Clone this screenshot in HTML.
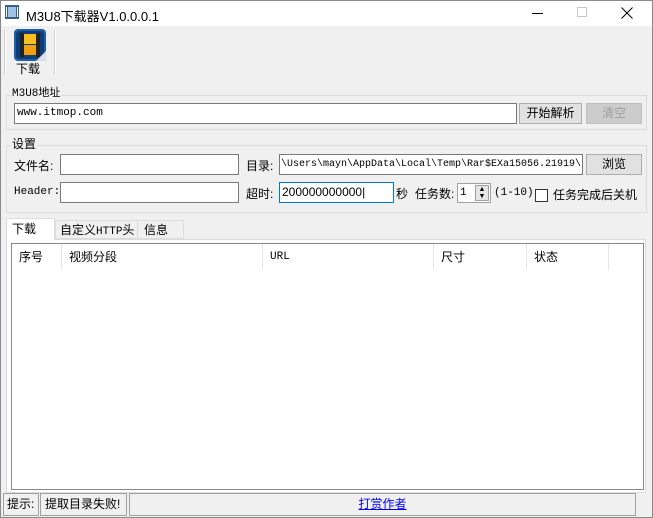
<!DOCTYPE html>
<html><head><meta charset="utf-8"><style>
*{box-sizing:border-box;margin:0;padding:0}
body{width:653px;height:518px;background:#f0f0f0;font-family:"Liberation Sans","Noto Sans CJK SC",sans-serif;font-size:12px;color:#000;position:relative;overflow:hidden}
.a{position:absolute}
.mono{font-family:"Liberation Mono","Noto Sans CJK SC",monospace;font-size:11px}
.in{position:absolute;background:#fff;border:1px solid #7a7a7a;height:21px;line-height:19px;padding-left:2px;white-space:nowrap;overflow:hidden}
.btn{position:absolute;background:#e1e1e1;border:1px solid #adadad;text-align:center;line-height:19px;height:21px}
.grp{position:absolute;border:1px solid #dcdcdc}
.lbl{position:absolute;background:#f0f0f0;padding:0 1px;line-height:14px}
.col{position:absolute;top:0;height:26px;border-right:1px solid #e5e5e5;line-height:26px;padding-left:7px}
.sp{position:absolute;top:493px;height:23px;border:1px solid #a0a0a0;line-height:21px}
</style></head><body>
<div class="a" style="left:0;top:0;width:653px;height:518px;border:1px solid #8a8a8a"></div>
<div class="a" style="left:1px;top:1px;width:651px;height:25px;background:#fff"></div>
<svg class="a" style="left:5px;top:5px" width="14" height="14"><rect x="0" y="0" width="14" height="14" fill="#3a5f8a"/><rect x="3" y="2" width="8" height="10" fill="#9fc3e6"/><rect x="1" y="2" width="1" height="10" fill="#fff"/><rect x="12" y="2" width="1" height="10" fill="#fff"/></svg>
<div class="a" style="left:26px;top:6px;font-size:13px">M3U8下载器V1.0.0.0.1</div>
<div class="a" style="left:532px;top:13px;width:11px;height:1px;background:#000"></div>
<div class="a" style="left:577px;top:7px;width:10px;height:10px;border:1px solid #c8c8c8"></div>
<svg class="a" style="left:621px;top:7px" width="12" height="12"><path d="M0.5 0.5L11.5 11.5M11.5 0.5L0.5 11.5" stroke="#000" stroke-width="1"/></svg>
<div class="a" style="left:4px;top:30px;width:2px;height:45px;border-left:1px solid #d0d0d0;border-right:1px solid #fff"></div>
<div class="a" style="left:54px;top:30px;width:2px;height:45px;border-left:1px solid #d0d0d0;border-right:1px solid #fff"></div>
<svg class="a" style="left:14px;top:29px" width="32" height="32"><rect x="0" y="0" width="32" height="32" rx="4" fill="#1f5fa8"/><rect x="2" y="2" width="28" height="28" rx="3" fill="#0f3d78"/><rect x="6" y="4" width="4" height="24" fill="#222"/><rect x="22" y="4" width="4" height="24" fill="#222"/><rect x="10" y="5" width="12" height="10" fill="#f5c020"/><rect x="10" y="16" width="12" height="10" fill="#f0a010"/><path d="M22 32L32 22L32 32Z" fill="#dde"/></svg>
<div class="a" style="left:16px;top:60px">下载</div>
<div class="grp" style="left:6px;top:95px;width:641px;height:35px"></div>
<div class="lbl mono" style="left:11px;top:87px">M3U8地址</div>
<div class="in mono" style="left:14px;top:103px;width:503px">www.itmop.com</div>
<div class="btn" style="left:519px;top:103px;width:63px">开始解析</div>
<div class="btn" style="left:586px;top:103px;width:56px;background:#cccccc;border-color:#bfbfbf;color:#a0a0a0">清空</div>
<div class="grp" style="left:6px;top:145px;width:641px;height:68px"></div>
<div class="lbl" style="left:11px;top:137px">设置</div>
<div class="a" style="left:14px;top:157px">文件名:</div>
<div class="in" style="left:60px;top:154px;width:179px"></div>
<div class="a" style="left:246px;top:157px">目录:</div>
<div class="in mono" style="left:279px;top:154px;width:304px;font-size:10px;padding-left:1px">\Users\mayn\AppData\Local\Temp\Rar$EXa15056.21919\</div>
<div class="btn" style="left:586px;top:154px;width:56px">浏览</div>
<div class="a mono" style="left:14px;top:186px">Header:</div>
<div class="in" style="left:60px;top:182px;width:179px"></div>
<div class="a" style="left:246px;top:185px">超时:</div>
<div class="in" style="left:279px;top:182px;width:115px;border-color:#0078d7">200000000000|</div>
<div class="a" style="left:396px;top:185px">秒</div>
<div class="a" style="left:415px;top:185px">任务数:</div>
<div class="in mono" style="left:457px;top:183px;width:34px;height:20px;border-color:#a0a0a0">1</div>
<div class="a" style="left:475px;top:185px;width:14px;height:16px;background:#e6e6e6;border:1px solid #a0a0a0;font-size:7px;line-height:7px;text-align:center">▲<br>▼</div>
<div class="a mono" style="left:494px;top:187px">(1-10)</div>
<div class="a" style="left:535px;top:189px;width:13px;height:13px;background:#fff;border:1px solid #333"></div>
<div class="a" style="left:553px;top:186px">任务完成后关机</div>
<div class="a" style="left:6px;top:239px;width:640px;height:254px;background:#fff;border:1px solid #dcdcdc"></div>
<div class="a" style="left:6px;top:218px;width:49px;height:22px;background:#fff;border:1px solid #dcdcdc;border-bottom:none;padding:1px 0 0 5px">下载</div>
<div class="a" style="left:55px;top:220px;width:83px;height:19px;border:1px solid #dcdcdc;padding:0 0 0 4px">自定义<span class="mono">HTTP</span>头</div>
<div class="a" style="left:137px;top:220px;width:47px;height:19px;border:1px solid #dcdcdc;padding:0 0 0 6px">信息</div>
<div class="a" style="left:11px;top:243px;width:633px;height:247px;background:#fff;border:1px solid #828790;overflow:hidden">
<div class="col" style="left:0;width:50px">序号</div>
<div class="col" style="left:50px;width:201px">视频分段</div>
<div class="col mono" style="left:251px;width:171px">URL</div>
<div class="col" style="left:422px;width:93px">尺寸</div>
<div class="col" style="left:515px;width:82px">状态</div>
</div>
<div class="sp" style="left:3px;width:36px;padding-left:3px">提示:</div>
<div class="sp" style="left:40px;width:87px;padding-left:4px">提取目录失败!</div>
<div class="sp" style="left:129px;width:507px;text-align:center"><span style="color:#0000ff;text-decoration:underline">打赏作者</span></div>
</body></html>
